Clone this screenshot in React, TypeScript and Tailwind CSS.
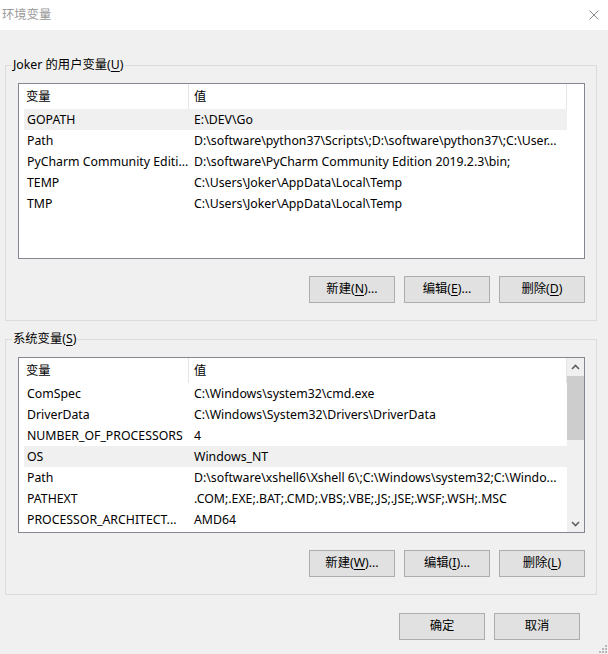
import React from "react";

type Row = [string, string];

const userVars: Row[] = [
  ["GOPATH", "E:\\DEV\\Go"],
  ["Path", "D:\\software\\python37\\Scripts\\;D:\\software\\python37\\;C:\\User..."],
  ["PyCharm Community Editi...", "D:\\software\\PyCharm Community Edition 2019.2.3\\bin;"],
  ["TEMP", "C:\\Users\\Joker\\AppData\\Local\\Temp"],
  ["TMP", "C:\\Users\\Joker\\AppData\\Local\\Temp"],
];

const systemVars: Row[] = [
  ["ComSpec", "C:\\Windows\\system32\\cmd.exe"],
  ["DriverData", "C:\\Windows\\System32\\Drivers\\DriverData"],
  ["NUMBER_OF_PROCESSORS", "4"],
  ["OS", "Windows_NT"],
  ["Path", "D:\\software\\xshell6\\Xshell 6\\;C:\\Windows\\system32;C:\\Windo..."],
  ["PATHEXT", ".COM;.EXE;.BAT;.CMD;.VBS;.VBE;.JS;.JSE;.WSF;.WSH;.MSC"],
  ["PROCESSOR_ARCHITECT...", "AMD64"],
];

// label with an underlined access key, e.g. 新建(N)...
const Mnemonic: React.FC<{ text: string; hotkey: string; tail?: string }> = ({ text, hotkey, tail = "" }) => (
  <span>
    {text}(<span className="underline underline-offset-2">{hotkey}</span>){tail}
  </span>
);

const Button: React.FC<{ children: React.ReactNode }> = ({ children }) => (
  <button className="w-[86px] h-[27px] bg-[#e1e1e1] border border-[#adadad] text-black flex items-center justify-center">
    {children}
  </button>
);

const Chevron: React.FC<{ up?: boolean }> = ({ up }) => (
  <svg width="9" height="6" viewBox="0 0 9 6" className={up ? "" : "rotate-180"}>
    <polyline points="1,5 4.5,1.5 8,5" fill="none" stroke="#606060" strokeWidth="1.6" />
  </svg>
);

const ScrollBar: React.FC = () => (
  <div className="w-[17px] bg-[#f0f0f0] flex flex-col">
    <div className="h-[17px] flex items-center justify-center">
      <Chevron up />
    </div>
    <div className="flex-1">
      <div className="mt-[1px] h-[64px] bg-[#cdcdcd]" />
    </div>
    <div className="h-[17px] flex items-center justify-center">
      <Chevron />
    </div>
  </div>
);

type ListViewProps = { rows: Row[]; selected: number; scroll?: boolean };

const ListView: React.FC<ListViewProps> = ({ rows, selected, scroll }) => (
  <div className="h-[176px] border border-[#828790] bg-white flex overflow-hidden">
    <div className="flex-1 pl-[5px] min-w-0">
      <div className="h-[25px] flex">
        <div className="w-[165px] pl-[2px] pt-[1px] flex items-center border-r border-[#e5e5e5]">变量</div>
        <div className="flex-1 pl-[5px] pt-[1px] flex items-center border-r border-[#e5e5e5]">值</div>
      </div>
      {rows.map(([name, value], i) => (
        <div key={name + i} className={`h-[21px] pt-[1px] flex items-center ${i === selected ? "bg-[#f0f0f0]" : ""}`}>
          <div className="w-[165px] pl-[3px] whitespace-nowrap overflow-hidden">{name}</div>
          <div className="flex-1 pl-[5px] whitespace-nowrap overflow-hidden">{value}</div>
        </div>
      ))}
    </div>
    {scroll ? <ScrollBar /> : <div className="w-[17px]" />}
  </div>
);

type GroupBoxProps = {
  title: string;
  hotkey: string;
  className?: string;
  children: React.ReactNode;
};

const GroupBox: React.FC<GroupBoxProps> = ({ title, hotkey, className = "", children }) => (
  <fieldset className={`border border-[#dcdcdc] pl-[7px] pr-[11px] pt-[10px] pb-[17px] ${className}`}>
    <legend className="px-[1px] ml-[-1px] leading-[16px]">
      <Mnemonic text={title} hotkey={hotkey} />
    </legend>
    <div className="ml-[5px]">{children}</div>
  </fieldset>
);

export default function App() {
  return (
    <div
      className="relative w-[608px] h-[654px] bg-[#f0f0f0] text-[12.3px] text-black overflow-hidden"
      style={{ fontFamily: '"Noto Sans", "Noto Sans CJK SC", sans-serif' }}
    >
      {/* title bar */}
      <div className="h-[30px] bg-white flex items-center justify-between pl-[2px] pr-[9px]">
        <span className="text-[#999999]">环境变量</span>
        <svg width="10" height="10" viewBox="0 0 10 10">
          <path d="M0.5 0.5 L9.5 9.5 M9.5 0.5 L0.5 9.5" stroke="#8c8c8c" strokeWidth="1" />
        </svg>
      </div>

      <div className="pl-[5px] pr-[11px]">
        <GroupBox title="Joker 的用户变量" hotkey="U" className="mt-[27px]">
          <ListView rows={userVars} selected={0} />
          <div className="mt-[17px] flex justify-end gap-[9px]">
            <Button><Mnemonic text="新建" hotkey="N" tail="..." /></Button>
            <Button><Mnemonic text="编辑" hotkey="E" tail="..." /></Button>
            <Button><Mnemonic text="删除" hotkey="D" /></Button>
          </div>
        </GroupBox>

        <GroupBox title="系统变量" hotkey="S" className="mt-[10px]">
          <ListView rows={systemVars} selected={3} scroll />
          <div className="mt-[17px] flex justify-end gap-[9px]">
            <Button><Mnemonic text="新建" hotkey="W" tail="..." /></Button>
            <Button><Mnemonic text="编辑" hotkey="I" tail="..." /></Button>
            <Button><Mnemonic text="删除" hotkey="L" /></Button>
          </div>
        </GroupBox>

        <div className="mt-[18px] pr-[17px] flex justify-end gap-[9px]">
          <Button>确定</Button>
          <Button>取消</Button>
        </div>
      </div>

      {/* size grip */}
      <svg width="8" height="8" viewBox="0 0 8 8" className="absolute right-[1px] bottom-[1px]">
        <g fill="#b8b8b8">
          <rect x="6" y="0" width="2" height="2" />
          <rect x="3" y="3" width="2" height="2" />
          <rect x="6" y="3" width="2" height="2" />
          <rect x="0" y="6" width="2" height="2" />
          <rect x="3" y="6" width="2" height="2" />
          <rect x="6" y="6" width="2" height="2" />
        </g>
      </svg>
    </div>
  );
}
